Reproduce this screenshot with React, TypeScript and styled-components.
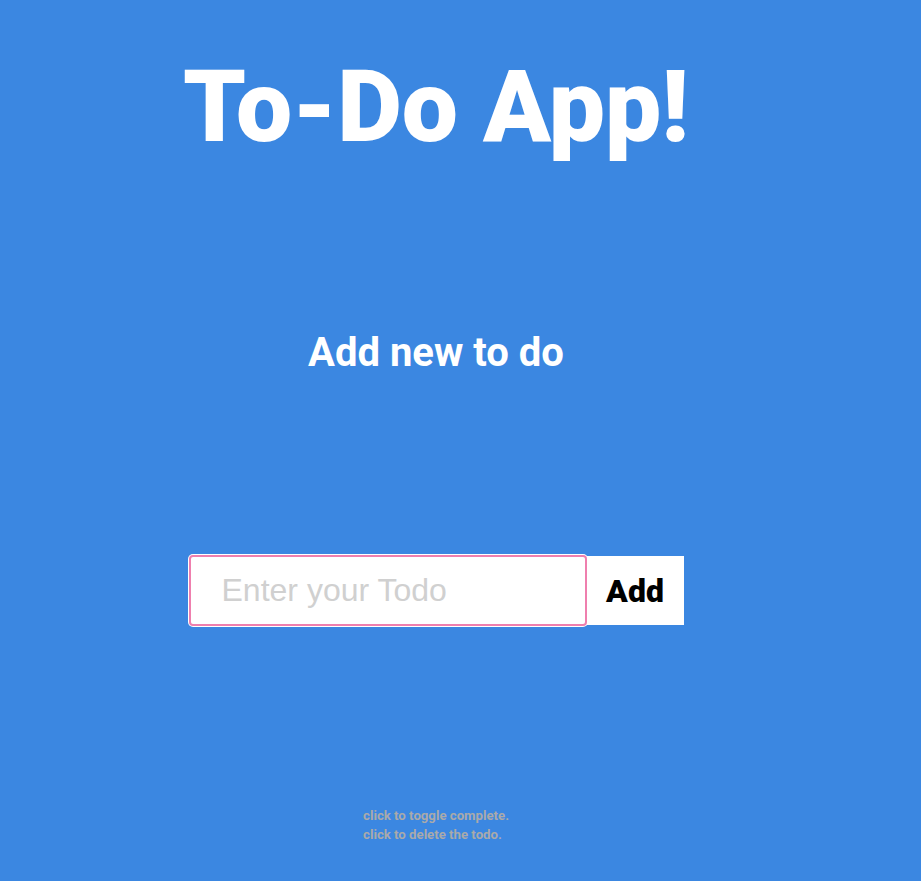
import { createGlobalStyle } from 'styled-components';
import styled from 'styled-components';

const GlobalStyle = createGlobalStyle`
  html, body {
    margin: 0;
    padding: 0;
    background-color: #3b87e1;
  }
  body {
    font-family: Roboto, "Liberation Sans", sans-serif;
    -webkit-font-smoothing: antialiased;
  }
`;

const Page = styled.div`
  min-height: 100vh;
  background-color: #3b87e1;
`;

const Wrapper = styled.div`
  width: 872px;
  display: flex;
  flex-direction: column;
  align-items: center;
`;

const Title = styled.h1`
  margin: 57px 0 0;
  font-size: 100px;
  line-height: 100px;
  font-weight: 900;
  color: #fff;
`;

const Subtitle = styled.h2`
  margin: 176px 0 0;
  font-size: 40px;
  line-height: 40px;
  font-weight: 700;
  color: #fff;
`;

const Form = styled.form`
  margin-top: 182px;
  display: flex;
  align-items: center;
`;

const TodoInput = styled.input`
  box-sizing: border-box;
  width: 398px;
  height: 71px;
  padding: 0 0 0 31px;
  border: 2px solid #ef7fae;
  border-radius: 4px;
  box-shadow: 0 0 0 1px #fff;
  outline: none;
  background: #fff;
  font-family: "Liberation Sans", Arial, sans-serif;
  font-size: 32px;
  color: #333;
  caret-color: #000;

  &::placeholder {
    color: #d0d0d0;
  }
`;

const AddButton = styled.button`
  box-sizing: border-box;
  width: 97px;
  height: 69px;
  border: none;
  border-radius: 0;
  background: #fff;
  font-family: Roboto, "Liberation Sans", sans-serif;
  font-size: 32px;
  font-weight: 900;
  color: #000;
  cursor: pointer;
  padding: 0;
`;

const Hints = styled.div`
  margin-top: 180px;
  font-size: 13.2px;
  line-height: 19px;
  font-weight: 700;
  color: #aaaaaa;
`;

export default function App() {
  return (
    <Page>
      <GlobalStyle />
      <Wrapper>
        <Title>To-Do App!</Title>
        <Subtitle>Add new to do</Subtitle>
        <Form onSubmit={(e) => e.preventDefault()}>
          <TodoInput placeholder="Enter your Todo" autoFocus />
          <AddButton type="submit">Add</AddButton>
        </Form>
        <Hints>
          <div>click to toggle complete.</div>
          <div>click to delete the todo.</div>
        </Hints>
      </Wrapper>
    </Page>
  );
}
